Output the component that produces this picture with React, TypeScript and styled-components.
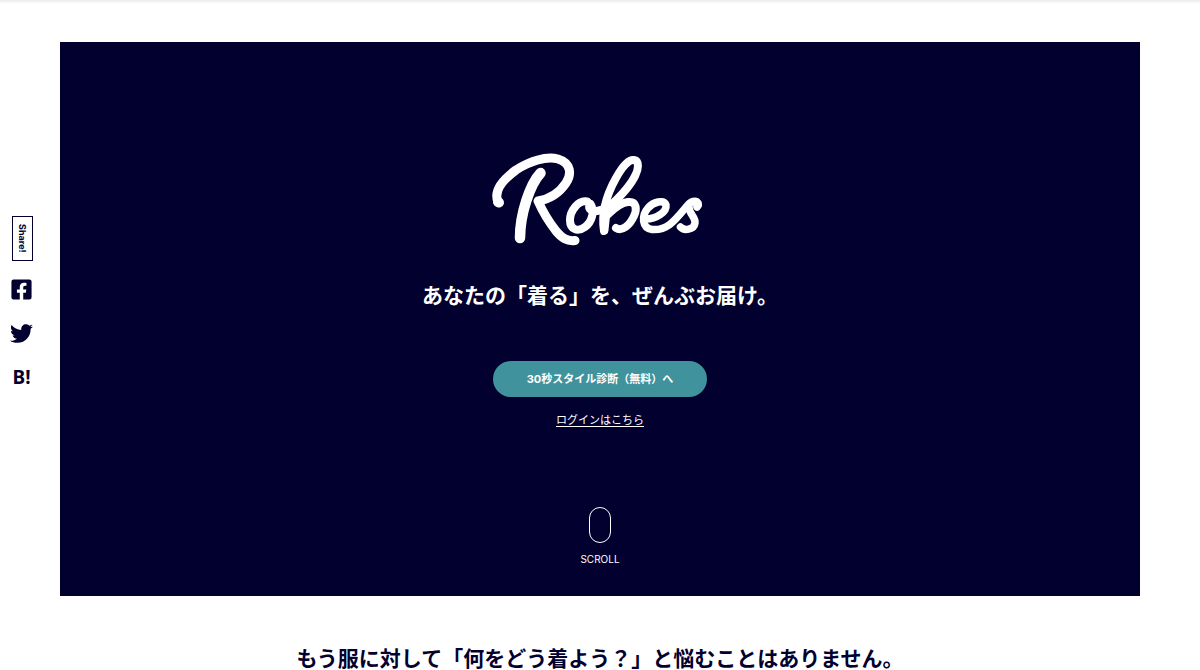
import React from "react";
import styled, { createGlobalStyle } from "styled-components";
import { FaFacebookSquare, FaTwitter } from "react-icons/fa";

const navy = "#02002e";
const sans = `"Noto Sans CJK JP", sans-serif`;

const GlobalStyle = createGlobalStyle`
  *, *::before, *::after { box-sizing: border-box; }
  body {
    margin: 0;
    background: #fff;
    color: ${navy};
    font-family: ${sans};
    overflow: hidden;
  }
`;

const Page = styled.div`
  display: grid;
  grid-template-columns: 60px minmax(0, 1fr) 60px;
  padding-top: 42px;
  background: linear-gradient(rgba(0, 0, 0, 0.08), transparent 4px);
`;

const ShareBar = styled.aside`
  display: flex;
  flex-direction: column;
  align-items: center;
  gap: 16px;
  padding: 174px 16px 0 0;
`;

const ShareLabel = styled.span`
  display: flex;
  align-items: center;
  justify-content: center;
  width: 21px;
  height: 45px;
  border: 1px solid ${navy};
  font: 700 9px/16px Inter, sans-serif;
  writing-mode: vertical-rl;
`;

const ShareLink = styled.a`
  display: flex;
  align-items: center;
  justify-content: center;
  width: 34px;
  height: 26px;
  color: inherit;
  font: 700 19px/24px "Noto Sans", sans-serif;
  text-decoration: none;
`;

const ShareLinks = styled.nav`
  display: flex;
  flex-direction: column;
  gap: 18px;
  margin-top: -1px;
  padding-right: 1px;
`;

const Hero = styled.section`
  display: flex;
  flex-direction: column;
  align-items: center;
  padding: 108px 16px 29px;
  background: ${navy};
  color: #fff;
`;

const Logo = styled.svg`
  display: block;
  width: 220px;
  height: 100px;
  fill: none;
  stroke: currentColor;
  stroke-linecap: round;
  stroke-linejoin: round;
`;

const Tagline = styled.p`
  margin: 28px 0 0;
  font-size: 21px;
  font-weight: 700;
  line-height: 32px;
`;

const StartButton = styled.button`
  width: 214px;
  height: 36px;
  margin-top: 51px;
  padding: 0;
  border: 0;
  border-radius: 18px;
  background: #40939c;
  color: #fff;
  font: 700 11px/16px Inter, ${sans};
  cursor: pointer;
`;

const LoginLink = styled.a`
  margin-top: 14px;
  color: inherit;
  font-size: 11px;
  line-height: 16px;
  text-underline-offset: 2px;
`;

const Scroll = styled.a`
  display: flex;
  flex-direction: column;
  align-items: center;
  gap: 8px;
  margin-top: 80px;
  color: inherit;
  font: 400 10px/16px Inter, sans-serif;
  text-decoration: none;

  &::before {
    content: "";
    width: 22px;
    height: 36px;
    border: 1px solid #fff;
    border-radius: 11px;
  }
`;

const Lead = styled.h2`
  grid-column: 1 / -1;
  margin: 45px 0 0;
  font-size: 21px;
  font-weight: 700;
  line-height: 32px;
  text-align: center;
`;

function RobesLogo() {
  return (
    <Logo viewBox="490 150 220 100" role="img" aria-label="Robes">
      <g strokeWidth="9">
        <path d="M498 202C493 190 505 178 516 170C530 161 546 156 558 159C571 163 572 174 566 183C560 192 550 199 538 201C542 210 549 222 556 231C562 238 567 241.500 575 240.500" />
        <path d="M498 202L499 202.500" strokeWidth="10" />
      </g>
      <path d="M540.500 173C530 184 520 214 520 238" strokeWidth="10.500" />
      <g strokeWidth="8">
        <path d="M587 201.500C578 200 570 211 570 220C570 230 578 232 585 227C592 222 595 211 590.500 204C587 207 590 212 597 211L605 209" />
        <path d="M604 231C601 213 607 194 616 178C622 167 629 159 634 160C640 161 638 170 635.500 175C631 185 622 195 609 207" />
        <path d="M604.500 230L606 216C610 213 618 203 628 202C637 201 637 210 634 216C630 225 622 232 616 228" />
      </g>
      <g strokeWidth="7.500">
        <path d="M646 219C656 219 667 212 666 205C664 199 653 202 648 208C641 216 642 228 652 229.500C668 231 676 219 687 206C691 201 696 200 698 203C699 205 698 206 697 207" />
        <path d="M689 207C689 214 696 217 695 223C694 230 684 231 680.500 227" />
      </g>
    </Logo>
  );
}

export default function App() {
  return (
    <>
      <GlobalStyle />
      <Page>
        <ShareBar aria-label="Share">
          <ShareLabel>Share!</ShareLabel>
          <ShareLinks aria-label="Share links">
            <ShareLink href="#facebook" aria-label="Facebook"><FaFacebookSquare size={23} /></ShareLink>
            <ShareLink href="#twitter" aria-label="Twitter"><FaTwitter size={23} /></ShareLink>
            <ShareLink href="#hatena">B!</ShareLink>
          </ShareLinks>
        </ShareBar>
        <Hero>
          <RobesLogo />
          <Tagline>あなたの「着る」を、ぜんぶお届け。</Tagline>
          <StartButton type="button">30秒スタイル診断（無料）へ</StartButton>
          <LoginLink href="#login">ログインはこちら</LoginLink>
          <Scroll href="#lead">SCROLL</Scroll>
        </Hero>
        <Lead id="lead">もう服に対して「何をどう着よう？」と悩むことはありません。</Lead>
      </Page>
    </>
  );
}
